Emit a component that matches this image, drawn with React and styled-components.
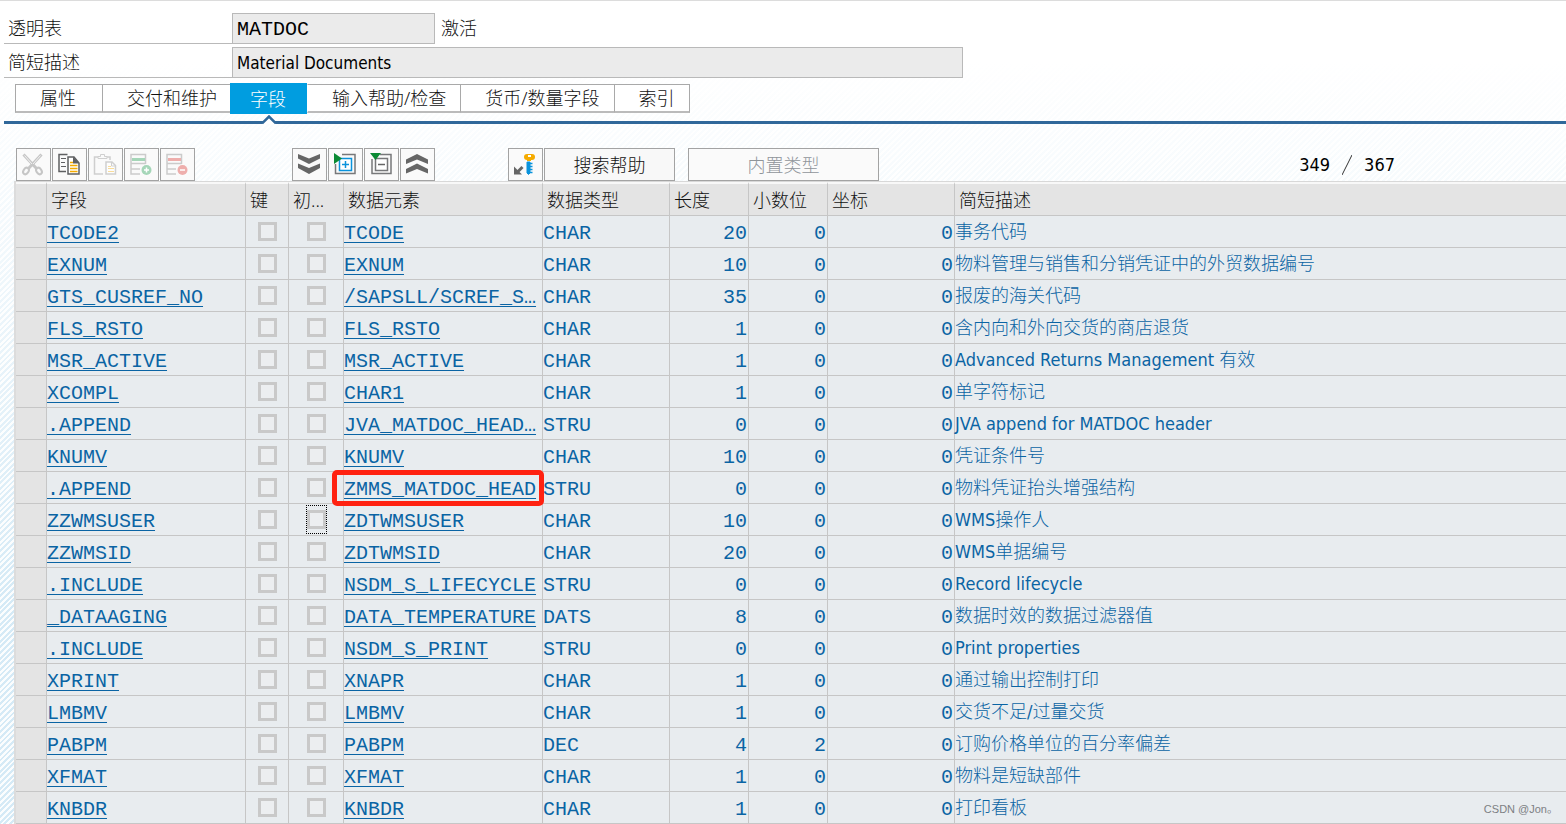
import React from 'react'
import styled, { createGlobalStyle, css } from 'styled-components'

const cjk = `"Noto Sans", "Noto Sans CJK SC", sans-serif`
const sans = `"DejaVu Sans Condensed", "Noto Sans CJK SC", sans-serif`
const mono = `"Liberation Mono", "Noto Sans CJK SC", monospace`

const tabs = ['属性', '交付和维护', '字段', '输入帮助/检查', '货币/数量字段', '索引']

const rows = [
  ['TCODE2', 'TCODE', 'CHAR', 20, 0, '事务代码'],
  ['EXNUM', 'EXNUM', 'CHAR', 10, 0, '物料管理与销售和分销凭证中的外贸数据编号'],
  ['GTS_CUSREF_NO', '/SAPSLL/SCREF_S…', 'CHAR', 35, 0, '报废的海关代码'],
  ['FLS_RSTO', 'FLS_RSTO', 'CHAR', 1, 0, '含内向和外向交货的商店退货'],
  ['MSR_ACTIVE', 'MSR_ACTIVE', 'CHAR', 1, 0, 'Advanced Returns Management 有效'],
  ['XCOMPL', 'CHAR1', 'CHAR', 1, 0, '单字符标记'],
  ['.APPEND', 'JVA_MATDOC_HEAD…', 'STRU', 0, 0, 'JVA append for MATDOC header'],
  ['KNUMV', 'KNUMV', 'CHAR', 10, 0, '凭证条件号'],
  ['.APPEND', 'ZMMS_MATDOC_HEAD', 'STRU', 0, 0, '物料凭证抬头增强结构'],
  ['ZZWMSUSER', 'ZDTWMSUSER', 'CHAR', 10, 0, 'WMS操作人'],
  ['ZZWMSID', 'ZDTWMSID', 'CHAR', 20, 0, 'WMS单据编号'],
  ['.INCLUDE', 'NSDM_S_LIFECYCLE', 'STRU', 0, 0, 'Record lifecycle'],
  ['_DATAAGING', 'DATA_TEMPERATURE', 'DATS', 8, 0, '数据时效的数据过滤器值'],
  ['.INCLUDE', 'NSDM_S_PRINT', 'STRU', 0, 0, 'Print properties'],
  ['XPRINT', 'XNAPR', 'CHAR', 1, 0, '通过输出控制打印'],
  ['LMBMV', 'LMBMV', 'CHAR', 1, 0, '交货不足/过量交货'],
  ['PABPM', 'PABPM', 'DEC', 4, 2, '订购价格单位的百分率偏差'],
  ['XFMAT', 'XFMAT', 'CHAR', 1, 0, '物料是短缺部件'],
  ['KNBDR', 'KNBDR', 'CHAR', 1, 0, '打印看板'],
]

function CutIcon() {
  return (
    <Icon viewBox="0 0 31 31" stroke="#c6c6c6">
      <path d="M5.5 5.5L19 20M23.500 5.500L10 20" strokeWidth="3" />
      <path d="M6.500 6.500L14 15M22.500 6.500L15 15" stroke="#f2f2f2" />
      <ellipse cx="8" cy="22" rx="2.500" ry="3.500" strokeWidth="2" transform="rotate(35 8 22)" />
      <ellipse cx="21" cy="22" rx="2.500" ry="3.500" strokeWidth="2" transform="rotate(-35 21 22)" />
    </Icon>
  )
}

function CopyIcon() {
  return (
    <Icon viewBox="0 0 31 31">
      <path d="M13.500 5.500H5V22.500H12" stroke="#5f6062" strokeWidth="1.500" />
      <path d="M7 9.500h5M7 13.500h4M7 17.500h5" stroke="#5f6062" />
      <path d="M14 8h6l5 6V25H14z" fill="#fff" stroke="#5f6062" strokeWidth="1.500" />
      <path d="M19 7.500v7h6.500z" fill="#5f6062" />
      <path d="M16 13.500h3M16 16.500h7.500M16 19.500h7.500M16 22.500h7.500" stroke="#f5ab00" strokeWidth="1.500" />
    </Icon>
  )
}

function PasteIcon() {
  return (
    <Icon viewBox="0 0 31 31" stroke="#cfcfcf">
      <path d="M8 8H4.500V25H13M17 8h3v3" strokeWidth="1.500" />
      <path d="M8 9.500V7.500h2.500V5.500h4v2H17v2z" />
      <path d="M16 13h6l3.500 3.500V25H16z" fill="#fdfdfd" strokeWidth="1.500" />
      <path d="M21.500 13v4h4" />
      <path d="M18 17.500h3M18 19.500h6M18 22.500h6" stroke="#f8dc9a" />
    </Icon>
  )
}

function RowIcon({ remove }) {
  const tint = remove ? '#eeaeac' : '#a5d6b8'
  return (
    <Icon viewBox="0 0 31 31">
      <path d="M14 25H5V5.500H19.500V15M5 14.500h14.500M5 20h9" stroke="#cbcbcb" strokeWidth="1.500" />
      <path d="M6 10.500h13" stroke={tint} strokeWidth="3" />
      <circle cx="20.500" cy="21" r="5" fill={tint} />
      <path d={remove ? 'M18 21h5' : 'M18 21h5M20.500 18.500v5'} stroke="#fff" strokeWidth="1.500" />
    </Icon>
  )
}

function ChevronsIcon({ up }) {
  return (
    <Icon viewBox="0 0 31 31">
      {up ? (
        <path d="M4 10.500L15 5l11 5.500V15L15 10.500 4 15zM4 20L15 14.500 26 20v4.500L15 20 4 24.500z" fill="#666" />
      ) : (
        <path d="M4 5l11 4.500L26 5v4.500L15 15 4 9.500zM4 14.500L15 19l11-4.500V19l-11 6L4 19z" fill="#666" />
      )}
    </Icon>
  )
}

function ExpandIcon() {
  return (
    <Icon viewBox="0 0 31 31">
      <path d="M12 5.500H25V24.500H5.500V15" stroke="#77787a" strokeWidth="1.500" />
      <path d="M9.500 9.500h12v12h-12z" fill="#fff" stroke="#0a93dc" strokeWidth="1.500" />
      <path d="M12 15.500h7M15.500 12v7" stroke="#0a93dc" strokeWidth="1.500" />
      <path d="M4 4l8 5.500L4 15z" fill="#0b8a34" />
    </Icon>
  )
}

function CollapseIcon() {
  return (
    <Icon viewBox="0 0 31 31">
      <path d="M14 5.500H25V24.500H6V10" stroke="#77787a" strokeWidth="1.500" />
      <path d="M9.500 9.500h12v12h-12z" fill="#fff" stroke="#77787a" strokeWidth="1.500" />
      <path d="M12 15.500h7" stroke="#666" strokeWidth="1.500" />
      <path d="M4 4h11l-5.500 7z" fill="#0b8a34" />
    </Icon>
  )
}

function KeyIcon() {
  return (
    <Icon viewBox="0 0 31 31">
      <path d="M17 13h3v11l-1.500 1.500L17 24z" fill="#0a93dc" stroke="#0a93dc" />
      <path d="M20 14.500h2.500M20 17.500h2.500M20 20.500h2.500M20 23.500h2.500" stroke="#0a93dc" strokeWidth="1.500" />
      <rect x="14" y="5" width="11" height="6" rx="3" fill="#f5ab00" />
      <rect x="17" y="10" width="4" height="2" fill="#f5ab00" />
      <rect x="18" y="6" width="3" height="2" fill="#fff" />
      <path d="M12.500 18l-5 5" stroke="#666" strokeWidth="3" />
      <path d="M4 17.500v8h8z" fill="#666" />
    </Icon>
  )
}

function App() {
  return (
    <Page>
      <GlobalStyle />
      <Header>
        <FormRow>
          <Label htmlFor="table-name">透明表</Label>
          <NameInput id="table-name" defaultValue="MATDOC" readOnly />
          <Status>激活</Status>
        </FormRow>
        <FormRow>
          <Label htmlFor="table-text">简短描述</Label>
          <TextInput id="table-text" defaultValue="Material Documents" readOnly />
        </FormRow>
      </Header>

      <TabBar>
        {tabs.map((tab) => (
          <Tab key={tab} $active={tab === '字段'}>
            {tab}
            {tab === '字段' && (
              <Caret width="14" height="9" viewBox="0 0 14 9">
                <path d="M0 9L7 2l7 7z" fill="#fff" />
                <path d="M0 8.500L7 1.500l7 7" fill="none" stroke="#30689a" strokeWidth="2.500" />
              </Caret>
            )}
          </Tab>
        ))}
      </TabBar>

      <Content>
        <Toolbar>
          <Group $end={97}>
            <IconButton aria-label="剪切" disabled><CutIcon /></IconButton>
            <IconButton aria-label="复制"><CopyIcon /></IconButton>
            <IconButton aria-label="粘贴" disabled><PasteIcon /></IconButton>
            <IconButton aria-label="插入行" disabled><RowIcon /></IconButton>
            <IconButton aria-label="删除行" disabled><RowIcon remove /></IconButton>
          </Group>
          <Group $end={73}>
            <IconButton aria-label="全部展开"><ChevronsIcon /></IconButton>
            <IconButton aria-label="展开"><ExpandIcon /></IconButton>
            <IconButton aria-label="折叠"><CollapseIcon /></IconButton>
            <IconButton aria-label="全部折叠"><ChevronsIcon up /></IconButton>
          </Group>
          <Group $end={13}>
            <IconButton aria-label="外键"><KeyIcon /></IconButton>
            <TextButton $width={131}>搜索帮助</TextButton>
          </Group>
          <TextButton $width={191} disabled>内置类型</TextButton>
          <Counter>
            <span>349</span>
            <svg width="10" height="20" viewBox="0 0 10 20">
              <path d="M0 20L10 0" stroke="#333" />
            </svg>
            <span>367</span>
          </Counter>
        </Toolbar>

        <Table>
          <colgroup>
            <Col $width={31} />
            <Col $width={199} />
            <Col $width={43} />
            <Col $width={55} />
            <Col $width={199} />
            <Col $width={127} />
            <Col $width={79} />
            <Col $width={79} />
            <Col $width={127} />
            <col />
          </colgroup>
          <thead>
            <tr>
              <Th aria-label="选择" />
              <Th>字段</Th>
              <Th>键</Th>
              <Th>初...</Th>
              <Th>数据元素</Th>
              <Th>数据类型</Th>
              <Th>长度</Th>
              <Th>小数位</Th>
              <Th>坐标</Th>
              <Th>简短描述</Th>
            </tr>
          </thead>
          <tbody>
            {rows.map(([field, element, type, length, decimals, text], i) => (
              <tr key={i}>
                <SelectCell />
                <Td><FieldLink href="#">{field}</FieldLink></Td>
                <CheckCell><Check type="checkbox" aria-label={`${field} 键`} /></CheckCell>
                <CheckCell>
                  <Focus $on={field === 'ZZWMSUSER'}>
                    <Check type="checkbox" aria-label={`${field} 初始值`} />
                  </Focus>
                </CheckCell>
                <Td>
                  <FieldLink href="#">{element}</FieldLink>
                  {element === 'ZMMS_MATDOC_HEAD' && <Marker />}
                </Td>
                <Td>{type}</Td>
                <NumberCell>{length}</NumberCell>
                <NumberCell>{decimals}</NumberCell>
                <NumberCell>0</NumberCell>
                <TextCell>{text}</TextCell>
              </tr>
            ))}
          </tbody>
        </Table>
      </Content>
      <Watermark>CSDN @Jon。</Watermark>
    </Page>
  )
}

export default App

const GlobalStyle = createGlobalStyle`
  *, *::before, *::after {
    box-sizing: border-box;
  }

  body {
    margin: 0;
    background: #fff;
  }

  button, input {
    margin: 0;
    border-radius: 0;
    font: inherit;
  }
`

const Page = styled.main`
  position: relative;
  min-height: 100vh;
  overflow: hidden;
  border-top: 1px solid #dcdcdc;
  background:
    linear-gradient(rgba(255, 255, 255, 1) 60px, rgba(255, 255, 255, 0.8) 180px, rgba(255, 255, 255, 0) 600px),
    repeating-linear-gradient(135deg, #d5eaf6 0 2px, #fbfdfe 2px 4px);
  font-family: ${cjk};
  font-size: 18px;
  font-weight: 300;
  color: #111;
`

const Header = styled.div`
  display: flex;
  flex-direction: column;
  gap: 3px;
  padding: 12px 4px 0;
`

const FormRow = styled.div`
  display: flex;
  height: 31px;
`

const Label = styled.label`
  width: 228px;
  padding-left: 4px;
  line-height: 30px;
  border-bottom: 1px solid #b9b9b9;
`

const NameInput = styled.input`
  width: 203px;
  padding: 2px 4px 0;
  border: 1px solid #b9b9b9;
  background: #ebebeb;
  font-family: ${mono};
  font-size: 20px;
  font-weight: 400;
  color: #000;
`

const TextInput = styled(NameInput)`
  width: 731px;
  padding: 0 4px;
  font-family: ${sans};
  font-size: 17px;
`

const Status = styled.span`
  padding-left: 6px;
  line-height: 30px;
`

const TabBar = styled.nav`
  display: flex;
  align-items: center;
  height: 46px;
  margin-left: 4px;
  padding: 0 0 2px 11px;
  border-bottom: 3px solid #30689a;
`

const Tab = styled.button`
  position: relative;
  height: 29px;
  min-width: 76px;
  padding: 0 13px 0 24px;
  border: 1px solid #a9a9a9;
  border-right: 0;
  border-bottom: 2px solid #bbb;
  background: #fff;
  line-height: 26px;
  color: #111;

  &:first-child {
    padding-right: 26px;
  }

  &:nth-child(n + 4) {
    padding-right: 14px;
  }

  &:last-child {
    border-right: 1px solid #a9a9a9;
  }

  ${({ $active }) =>
    $active &&
    css`
      height: 31px;
      padding: 0 21px 0 20px;
      border: 0;
      background: #009de0;
      color: #fff;

      & + button {
        border-left-color: #fff;
      }
    `}
`

const Caret = styled.svg`
  position: absolute;
  left: 32px;
  top: 32px;
`

const Content = styled.section`
  margin-left: 14px;
`

const Toolbar = styled.div`
  display: flex;
  height: 57px;
  padding: 24px 0 0 2px;
`

const Group = styled.div`
  display: flex;
  gap: 1px;
  margin-right: ${({ $end }) => $end}px;
`

const IconButton = styled.button`
  display: flex;
  align-items: center;
  justify-content: center;
  width: 35px;
  height: 33px;
  padding: 0;
  border: 1px solid #a3a3a3;
  background: #fafafa;
`

const Icon = styled.svg`
  width: 31px;
  height: 31px;
  fill: none;
`

const TextButton = styled.button`
  width: ${({ $width }) => $width}px;
  height: 33px;
  padding: 0 0 2px;
  border: 1px solid #a3a3a3;
  background: #f8f8f8;
  color: #111;

  &:disabled {
    background: #fafafa;
    color: #90959a;
  }
`

const Counter = styled.div`
  display: flex;
  align-items: center;
  gap: 12px;
  height: 33px;
  margin-left: auto;
  padding-right: 171px;
  font-family: ${sans};
  font-weight: 400;
  color: #000;
`

const Table = styled.table`
  width: 100%;
  table-layout: fixed;
  border-collapse: separate;
  border-spacing: 0;
  border-top: 1px solid #d8d8d8;
  border-left: 2px solid #dcdcdc;
`

const Col = styled.col`
  width: ${({ $width }) => $width}px;
`

const Th = styled.th`
  height: 34px;
  padding: 0 4px;
  border-top: 2px solid #f8f8f8;
  border-right: 1px solid #c6c6c6;
  border-bottom: 1px solid #c6c6c6;
  background: #e4e4e4;
  font-weight: 300;
  line-height: 24px;
  text-align: left;
  white-space: nowrap;

  &:last-child {
    border-right: 0;
  }
`

const Td = styled.td`
  position: relative;
  height: 32px;
  padding: 4px 0 0;
  border-right: 1px solid #c6c6c6;
  border-bottom: 1px solid #c6c6c6;
  background: #e8ecef;
  font-family: ${mono};
  font-size: 20px;
  font-weight: 400;
  line-height: 24px;
  white-space: nowrap;
  color: #0a64a4;

  &:last-child {
    border-right: 0;
  }
`

const SelectCell = styled(Td)`
  background: #e4e4e4;
`

const CheckCell = styled(Td)`
  padding: 0;
  line-height: 0;
  text-align: center;
`

const NumberCell = styled(Td)`
  padding-right: 1px;
  text-align: right;
`

const TextCell = styled(Td)`
  padding: 0;
  font-family: ${sans};
  font-size: 18px;
  font-weight: 300;
`

const FieldLink = styled.a`
  color: inherit;
  text-decoration: underline 1px;
  text-underline-offset: 3px;
  text-decoration-skip-ink: none;
`

const Check = styled.input`
  appearance: none;
  width: 19px;
  height: 19px;
  border: 3px solid #c9c9c9;
  background: #eceef0;
`

const Focus = styled.span`
  display: inline-flex;
  align-items: center;
  justify-content: center;
  width: 21px;
  height: 29px;
  outline: ${({ $on }) => ($on ? '1px dotted #000' : 'none')};
  outline-offset: -1px;
`

const Marker = styled.span`
  position: absolute;
  inset: -2px -2px -3px -12px;
  z-index: 1;
  border: 5px solid #ff2211;
  border-radius: 5px;
  pointer-events: none;
`

const Watermark = styled.div`
  position: absolute;
  right: 8px;
  bottom: 7px;
  font-family: "Liberation Sans", "Noto Sans CJK SC", sans-serif;
  font-size: 11px;
  font-weight: 400;
  line-height: 16px;
  color: #7d8083;
`
